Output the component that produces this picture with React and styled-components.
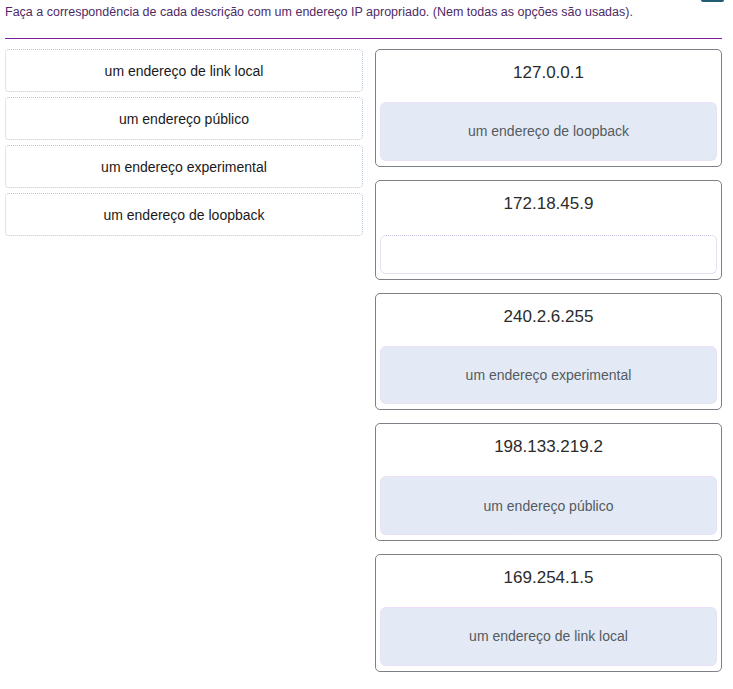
import styled, { createGlobalStyle } from 'styled-components'

const GlobalStyle = createGlobalStyle`
body {
    margin: 0;
    background: #ffffff;
    font-family: "Liberation Sans", Arial, sans-serif;
}
`;

const Page = styled.div`
width: 717px;
margin-left: 5px;
display: flex;
flex-direction: column;
`;

const TopBar = styled.div`
height: 2px;
display: flex;
justify-content: flex-end;
margin-right: -2px;
`;

const TopButton = styled.div`
width: 23px;
height: 2px;
background: #1f5d73;
border-radius: 0 0 2px 2px;
`;

const Heading = styled.p`
margin: 2px 0 0 0;
font-size: 12.5px;
line-height: 16px;
color: #4f2a66;
`;

const Divider = styled.div`
margin: 18px 0 10px 0;
height: 0;
border-top: 1px solid #7a1fa0;
`;

const Board = styled.div`
display: grid;
grid-template-columns: 358px 347px;
column-gap: 12px;
align-items: start;
`;

const Options = styled.div`
display: flex;
flex-direction: column;
gap: 5px;
`;

const Option = styled.div`
height: 43px;
box-sizing: border-box;
border: 1px dotted #b7c7db;
border-radius: 4px;
display: flex;
align-items: center;
justify-content: center;
font-size: 14px;
color: #1a1a1a;
`;

const Targets = styled.div`
display: flex;
flex-direction: column;
gap: 13px;
`;

const Card = styled.div`
box-sizing: border-box;
border: 1px solid #7d8086;
border-radius: 5px;
padding: 0 4px 5px 4px;
display: flex;
flex-direction: column;
`;

const Address = styled.div`
height: 52px;
box-sizing: border-box;
padding-top: 13px;
font-size: 17px;
line-height: 20px;
text-align: center;
color: #2b2b2b;
`;

const Slot = styled.div`
box-sizing: border-box;
height: ${(props) => (props.filled ? '58.67px' : '39px')};
margin-top: ${(props) => (props.filled ? '0px' : '2px')};
background: ${(props) => (props.filled ? '#e3eaf6' : '#ffffff')};
border: 1px dotted ${(props) => (props.filled ? '#eadcf6' : '#c9c3e6')};
border-radius: 6px;
display: flex;
align-items: center;
justify-content: center;
font-size: 14px;
color: #555a60;
`;

const options = [
    'um endereço de link local',
    'um endereço público',
    'um endereço experimental',
    'um endereço de loopback',
]

const targets = [
    { ip: '127.0.0.1', answer: 'um endereço de loopback' },
    { ip: '172.18.45.9', answer: '' },
    { ip: '240.2.6.255', answer: 'um endereço experimental' },
    { ip: '198.133.219.2', answer: 'um endereço público' },
    { ip: '169.254.1.5', answer: 'um endereço de link local' },
]

export default function App() {
    return (
        <>
            <GlobalStyle />
            <Page>
                <TopBar><TopButton /></TopBar>
                <Heading>Faça a correspondência de cada descrição com um endereço IP apropriado. (Nem todas as opções são usadas).</Heading>
                <Divider />
                <Board>
                    <Options>
                        {options.map((o) => <Option key={o}>{o}</Option>)}
                    </Options>
                    <Targets>
                        {targets.map((t) => (
                            <Card key={t.ip}>
                                <Address>{t.ip}</Address>
                                <Slot filled={t.answer !== ''}>{t.answer}</Slot>
                            </Card>
                        ))}
                    </Targets>
                </Board>
            </Page>
        </>
    )
}
